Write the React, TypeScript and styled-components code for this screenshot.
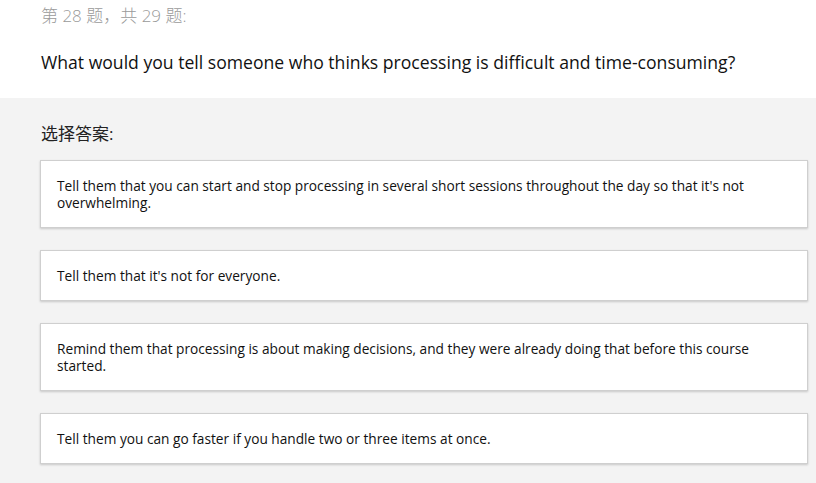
import React from 'react';
import styled, { createGlobalStyle } from 'styled-components';

const GlobalStyle = createGlobalStyle`
  html, body {
    margin: 0;
    padding: 0;
    background: #f3f3f3;
    font-family: "Open Sans", "Noto Sans CJK SC", sans-serif;
  }
`;

const Page = styled.div`
  width: 816px;
  min-height: 483px;
  background: #f3f3f3;
`;

const Header = styled.header`
  background: #fff;
  padding: 3px 40px 0 41px;
  height: 95px;
`;

const Counter = styled.div`
  font-size: 17px;
  line-height: 26px;
  color: #9a9a9a;
  font-weight: 300;
`;

const Question = styled.h1`
  margin: 20px 0 0;
  font-size: 17.6px;
  font-weight: 400;
  line-height: 26px;
  color: #111;
`;

const Body = styled.main`
  padding: 23px 8px 20px 40px;
`;

const Label = styled.div`
  font-size: 17px;
  line-height: 26px;
  color: #222;
  margin-left: 1px;
  margin-bottom: 13px;
`;

const Options = styled.div`
  display: flex;
  flex-direction: column;
  gap: 22px;
`;

const Option = styled.div`
  background: #fff;
  border: 1px solid #cfcfcf;
  box-shadow: 0 1px 2px rgba(0, 0, 0, 0.18);
  padding: 16px 56px 16px 16px;
  font-size: 13.7px;
  line-height: 17px;
  color: #111;
`;

const answers = [
  "Tell them that you can start and stop processing in several short sessions throughout the day so that it's not overwhelming.",
  "Tell them that it's not for everyone.",
  'Remind them that processing is about making decisions, and they were already doing that before this course started.',
  'Tell them you can go faster if you handle two or three items at once.',
];

function App() {
  return (
    <Page>
      <GlobalStyle />
      <Header>
        <Counter>第 28 题，共 29 题:</Counter>
        <Question>What would you tell someone who thinks processing is difficult and time-consuming?</Question>
      </Header>
      <Body>
        <Label>选择答案:</Label>
        <Options>
          {answers.map((a) => (
            <Option key={a}>{a}</Option>
          ))}
        </Options>
      </Body>
    </Page>
  );
}

export default App;
